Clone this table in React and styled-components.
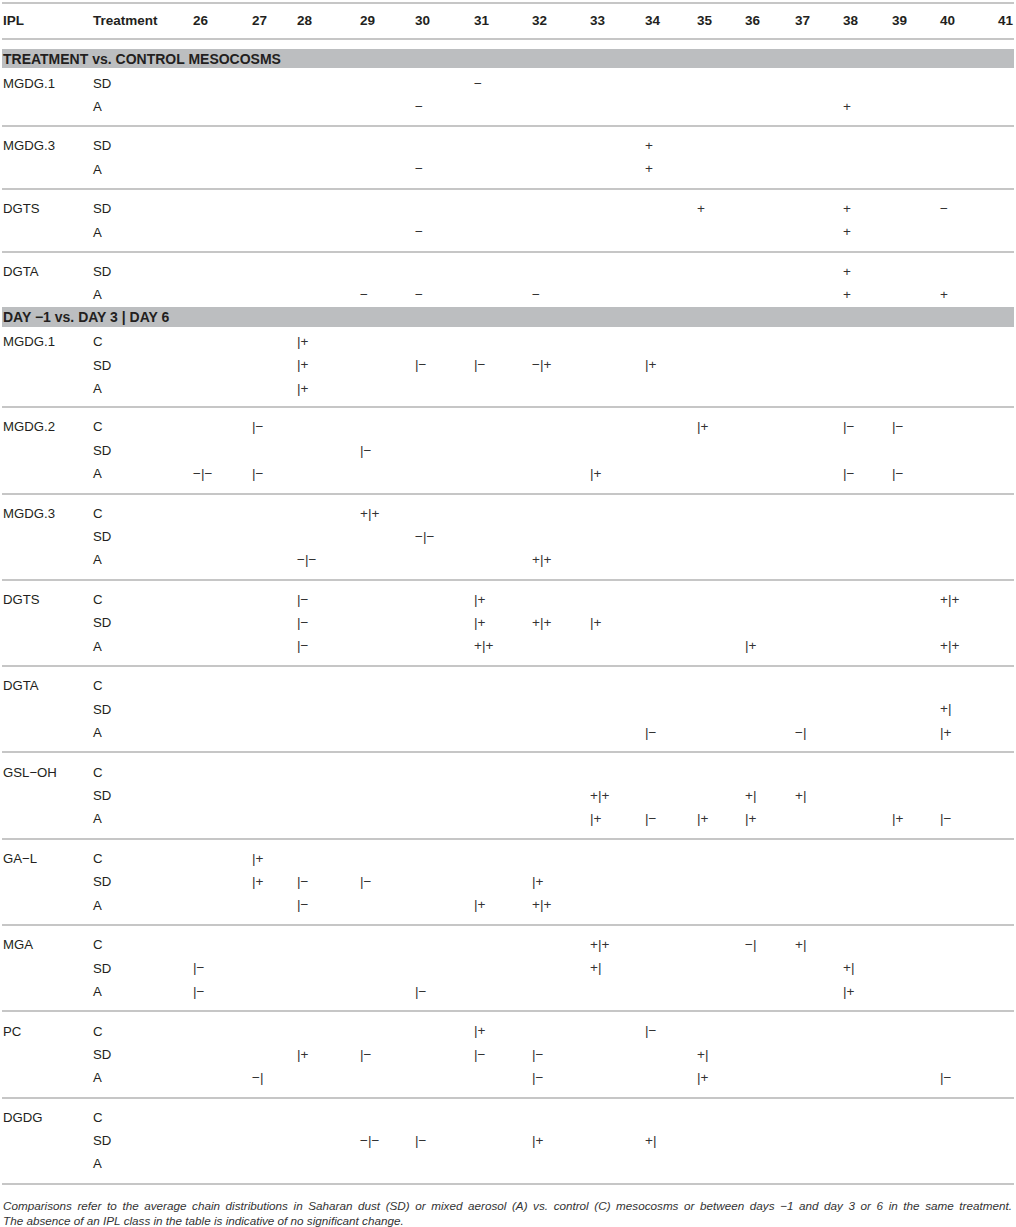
import React from "react";
import styled, { createGlobalStyle } from "styled-components";

const GlobalStyle = createGlobalStyle`
  body {
    margin: 0;
    background: #fff;
    color: #231f20;
    font-family: "Liberation Sans", Arial, sans-serif;
  }
`;

const COLUMNS =
  "90px 100px 59px 45px 63px 55px 59px 58px 58px 55px 52px 48px 50px 48px 49px 48px 58px 1fr";
const CHAINS = [26, 27, 28, 29, 30, 31, 32, 33, 34, 35, 36, 37, 38, 39, 40, 41];
const LINE = "#c6c6c6";

const Table = styled.div`
  width: 1012px;
  margin-left: 2px;
  padding-top: 2px;
`;

const HeaderRow = styled.div`
  display: grid;
  grid-template-columns: ${COLUMNS};
  align-items: center;
  height: 34px;
  border-top: 2px solid ${LINE};
  border-bottom: 2px solid ${LINE};
  font-weight: bold;
  font-size: 13.5px;
`;

const Band = styled.div`
  display: flex;
  align-items: center;
  margin-top: ${p => p.$gap}px;
  height: ${p => p.$height}px;
  padding-left: 1px;
  background: #bcbec0;
  font-weight: bold;
  font-size: 14px;
`;

const Group = styled.div`
  padding-top: ${p => p.$top}px;
  padding-bottom: ${p => p.$bottom}px;
  border-bottom: ${p => (p.$open ? "none" : `2px solid ${LINE}`)};
`;

const Row = styled.div`
  display: grid;
  grid-template-columns: ${COLUMNS};
  align-items: center;
  height: 23.33px;
  font-size: 13.2px;
`;

const Cell = styled.div`
  padding-left: 1px;
  white-space: nowrap;
  line-height: 1;
`;

const Mark = styled(Cell)`
  color: #333;
  font-size: 13.6px;
`;

const Caption = styled.div`
  margin-left: 3px;
  width: 1009px;
  font-style: italic;
  font-size: 11.7px;
  line-height: 15px;
  color: #333;
`;

const CaptionLine = styled.p`
  margin: 0;
  padding-top: ${p => p.$top}px;
  white-space: nowrap;
  text-align: ${p => (p.$justify ? "justify" : "left")};
  text-align-last: ${p => (p.$justify ? "justify" : "left")};
`;

const M = "\u2212";

const treatment = [
  { ipl: "MGDG.1", rows: [["SD", { 31: M }], ["A", { 30: M, 38: "+" }]] },
  { ipl: "MGDG.3", rows: [["SD", { 34: "+" }], ["A", { 30: M, 34: "+" }]] },
  { ipl: "DGTS", rows: [["SD", { 35: "+", 38: "+", 40: M }], ["A", { 30: M, 38: "+" }]] },
  { ipl: "DGTA", rows: [["SD", { 38: "+" }], ["A", { 29: M, 30: M, 32: M, 38: "+", 40: "+" }]] }
];

const days = [
  {
    ipl: "MGDG.1",
    rows: [
      ["C", { 28: "|+" }],
      ["SD", { 28: "|+", 30: `|${M}`, 31: `|${M}`, 32: `${M}|+`, 34: "|+" }],
      ["A", { 28: "|+" }]
    ]
  },
  {
    ipl: "MGDG.2",
    rows: [
      ["C", { 27: `|${M}`, 35: "|+", 38: `|${M}`, 39: `|${M}` }],
      ["SD", { 29: `|${M}` }],
      ["A", { 26: `${M}|${M}`, 27: `|${M}`, 33: "|+", 38: `|${M}`, 39: `|${M}` }]
    ]
  },
  {
    ipl: "MGDG.3",
    rows: [
      ["C", { 29: "+|+" }],
      ["SD", { 30: `${M}|${M}` }],
      ["A", { 28: `${M}|${M}`, 32: "+|+" }]
    ]
  },
  {
    ipl: "DGTS",
    rows: [
      ["C", { 28: `|${M}`, 31: "|+", 40: "+|+" }],
      ["SD", { 28: `|${M}`, 31: "|+", 32: "+|+", 33: "|+" }],
      ["A", { 28: `|${M}`, 31: "+|+", 36: "|+", 40: "+|+" }]
    ]
  },
  {
    ipl: "DGTA",
    rows: [
      ["C", {}],
      ["SD", { 40: "+|" }],
      ["A", { 34: `|${M}`, 37: `${M}|`, 40: "|+" }]
    ]
  },
  {
    ipl: `GSL${M}OH`,
    rows: [
      ["C", {}],
      ["SD", { 33: "+|+", 36: "+|", 37: "+|" }],
      ["A", { 33: "|+", 34: `|${M}`, 35: "|+", 36: "|+", 39: "|+", 40: `|${M}` }]
    ]
  },
  {
    ipl: `GA${M}L`,
    rows: [
      ["C", { 27: "|+" }],
      ["SD", { 27: "|+", 28: `|${M}`, 29: `|${M}`, 32: "|+" }],
      ["A", { 28: `|${M}`, 31: "|+", 32: "+|+" }]
    ]
  },
  {
    ipl: "MGA",
    rows: [
      ["C", { 33: "+|+", 36: `${M}|`, 37: "+|" }],
      ["SD", { 26: `|${M}`, 33: "+|", 38: "+|" }],
      ["A", { 26: `|${M}`, 30: `|${M}`, 38: "|+" }]
    ]
  },
  {
    ipl: "PC",
    rows: [
      ["C", { 31: "|+", 34: `|${M}` }],
      ["SD", { 28: "|+", 29: `|${M}`, 31: `|${M}`, 32: `|${M}`, 35: "+|" }],
      ["A", { 27: `${M}|`, 32: `|${M}`, 35: "|+", 40: `|${M}` }]
    ]
  },
  {
    ipl: "DGDG",
    rows: [
      ["C", {}],
      ["SD", { 29: `${M}|${M}`, 30: `|${M}`, 32: "|+", 34: "+|" }],
      ["A", {}]
    ]
  }
];

const GroupRows = ({ group, top, bottom, open }) => (
  <Group $top={top} $bottom={bottom} $open={open}>
    {group.rows.map(([treat, marks], i) => (
      <Row key={treat}>
        <Cell>{i === 0 ? group.ipl : ""}</Cell>
        <Cell>{treat}</Cell>
        {CHAINS.map(c => (
          <Mark key={c}>{marks[c] || ""}</Mark>
        ))}
      </Row>
    ))}
  </Group>
);

const App = () => (
  <>
    <GlobalStyle />
    <Table>
      <HeaderRow>
        <Cell>IPL</Cell>
        <Cell>Treatment</Cell>
        {CHAINS.map(c => (
          <Cell key={c}>{c}</Cell>
        ))}
      </HeaderRow>

      <Band $gap={9} $height={19}>TREATMENT vs. CONTROL MESOCOSMS</Band>
      {treatment.map((g, i) => (
        <GroupRows
          key={g.ipl}
          group={g}
          top={i === 0 ? 4 : 7.165}
          bottom={i === treatment.length - 1 ? 0 : i === 0 ? 6.33 : 7.165}
          open={i === treatment.length - 1}
        />
      ))}

      <Band $gap={0} $height={20.5}>DAY {M}1 vs. DAY 3 | DAY 6</Band>
      {days.map((g, i) => (
        <GroupRows
          key={g.ipl}
          group={g}
          top={i === 0 ? 3 : 7.165}
          bottom={i === 0 ? 6 : 7.165}
        />
      ))}
    </Table>
    <Caption>
      <CaptionLine $top={13} $justify>
        Comparisons refer to the average chain distributions in Saharan dust (SD) or mixed aerosol (A) vs. control (C)
        mesocosms or between days {M}1 and day 3 or 6 in the same treatment.
      </CaptionLine>
      <CaptionLine $top={0}>The absence of an IPL class in the table is indicative of no significant change.</CaptionLine>
    </Caption>
  </>
);

export default App;
